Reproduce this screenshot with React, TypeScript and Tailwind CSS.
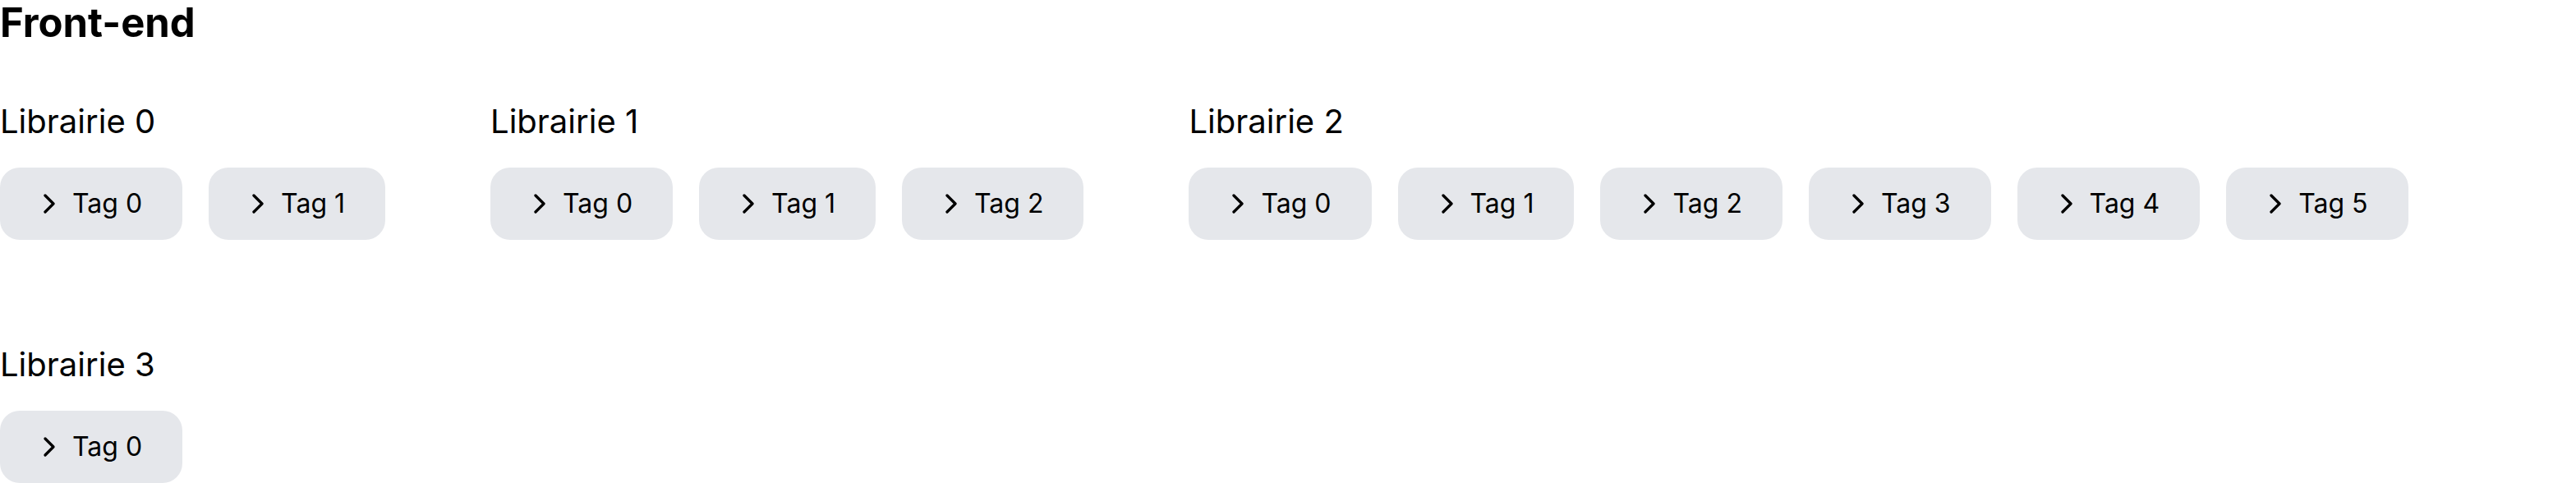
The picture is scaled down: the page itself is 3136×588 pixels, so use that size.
import React from "react";
import { ChevronRight } from "lucide-react";

const libs = [2, 3, 6, 1];

export default function App() {
  return (
    <div className="font-[Inter,'Noto_Sans',sans-serif] text-black bg-white">
      <h2 className="text-[49px] leading-[56px] font-bold mb-[64px]">Front-end</h2>
      <div className="flex flex-wrap gap-x-[128px] gap-y-[124px]">
        {libs.map((count, i) => (
          <div key={i} className="flex flex-col">
            <h3 className="text-[40px] leading-[56px] font-normal mb-[28px]">Librairie {i}</h3>
            <div className="flex gap-[32px]">
              {Array.from({ length: count }).map((_, j) => (
                <button
                  key={j}
                  className="flex items-center h-[88px] pl-[40px] pr-[49px] gap-[8px] rounded-[24px] bg-[#e5e7eb] text-[32px] leading-[48px]"
                >
                  <ChevronRight size={40} strokeWidth={2} />
                  <span>Tag {j}</span>
                </button>
              ))}
            </div>
          </div>
        ))}
      </div>
    </div>
  );
}
